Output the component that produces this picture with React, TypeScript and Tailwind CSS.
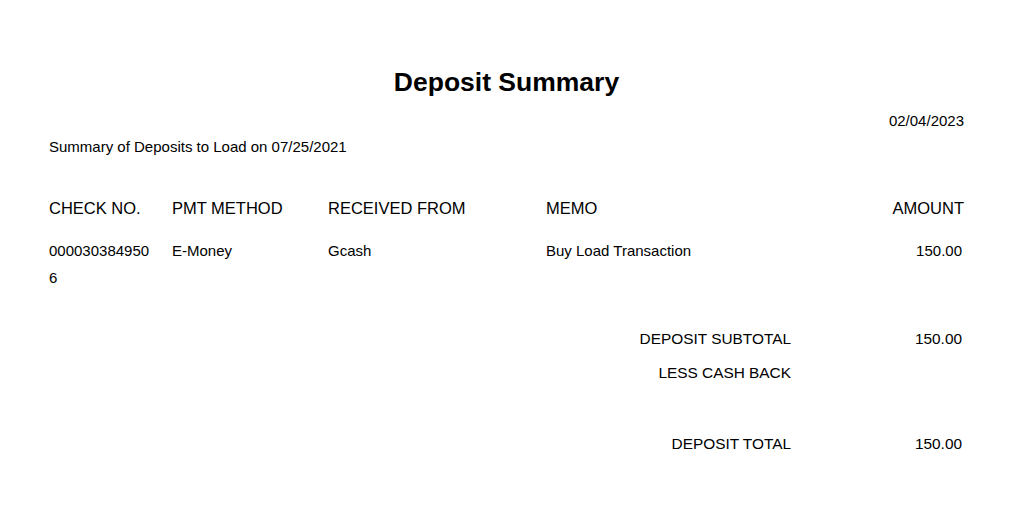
import React from 'react'

const rows = [
  { check: '0000303849506', method: 'E-Money', from: 'Gcash', memo: 'Buy Load Transaction', amount: '150.00' },
]

export default function App() {
  return (
    <div className="min-h-[523px] w-full bg-white pl-[49px] pr-[51px] pt-[67px] text-black font-['Liberation_Sans',Arial,sans-serif]">
      <h1 className="text-center text-[26.5px] leading-[30px] font-bold">Deposit Summary</h1>

      <div className="mt-[15px] text-right text-[15px] leading-[18px]">02/04/2023</div>
      <div className="mt-[8px] text-[15px] leading-[18px]">Summary of Deposits to Load on 07/25/2021</div>

      {/* table header */}
      <div className="mt-[42px] flex text-[16.5px] leading-[20px]">
        <div className="w-[123px]">CHECK NO.</div>
        <div className="w-[156px]">PMT METHOD</div>
        <div className="w-[218px]">RECEIVED FROM</div>
        <div className="flex-1">MEMO</div>
        <div className="text-right">AMOUNT</div>
      </div>

      {rows.map((r) => (
        <div key={r.check} className="mt-[19px] flex text-[15px] leading-[27px]">
          <div className="w-[123px] pr-[18px] break-all">{r.check}</div>
          <div className="w-[156px]">{r.method}</div>
          <div className="w-[218px]">{r.from}</div>
          <div className="flex-1">{r.memo}</div>
          <div className="pr-[2px] text-right">{r.amount}</div>
        </div>
      ))}

      {/* totals */}
      <div className="mt-[34px] flex flex-col text-[15.4px] leading-[27px]">
        <div className="flex justify-end">
          <div>DEPOSIT SUBTOTAL</div>
          <div className="w-[173px] pr-[2px] text-right">150.00</div>
        </div>
        <div className="mt-[7px] flex justify-end">
          <div>LESS CASH BACK</div>
          <div className="w-[173px] pr-[2px] text-right"></div>
        </div>
        <div className="mt-[44px] flex justify-end">
          <div>DEPOSIT TOTAL</div>
          <div className="w-[173px] pr-[2px] text-right">150.00</div>
        </div>
      </div>
    </div>
  )
}
